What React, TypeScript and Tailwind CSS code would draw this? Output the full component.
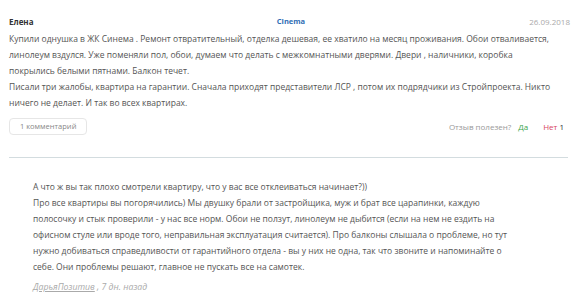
import React from 'react';

const reviewLines = [
  'Купили однушка в ЖК Синема . Ремонт отвратительный, отделка дешевая, ее хватило на месяц проживания. Обои отваливается,',
  'линолеум вздулся. Уже поменяли пол, обои, думаем что делать с межкомнатными дверями. Двери , наличники, коробка',
  'покрылись белыми пятнами. Балкон течет.',
  'Писали три жалобы, квартира на гарантии. Сначала приходят представители ЛСР , потом их подрядчики из Стройпроекта. Никто',
  'ничего не делает. И так во всех квартирах.',
];

const replyLines = [
  'А что ж вы так плохо смотрели квартиру, что у вас все отклеиваться начинает?))',
  'Про все квартиры вы погорячились) Мы двушку брали от застройщика, муж и брат все царапинки, каждую',
  'полосочку и стык проверили - у нас все норм. Обои не ползут, линолеум не дыбится (если на нем не ездить на',
  'офисном стуле или вроде того, неправильная эксплуатация считается). Про балконы слышала о проблеме, но тут',
  'нужно добиваться справедливости от гарантийного отдела - вы у них не одна, так что звоните и напоминайте о',
  'себе. Они проблемы решают, главное не пускать все на самотек.',
];

const App: React.FC = () => {
  return (
    <div className="w-[582px] h-[300px] bg-white overflow-hidden font-['Open_Sans',sans-serif]">
      {/* Review */}
      <div className="px-[9px] pt-[14px]">
        <div className="flex items-center justify-between h-4">
          <span className="w-24 text-[8px] font-bold text-[#333]">Елена</span>
          <span className="text-[7.5px] font-bold text-[#2f6db5]">Cinema</span>
          <span className="w-24 pr-[3px] text-right text-[8px] text-[#aaa]">26.09.2018</span>
        </div>
        <p className="mt-[1px] text-[8.5px] leading-4 text-[#555]">
          {reviewLines.map((line) => (
            <span key={line} className="block whitespace-nowrap">{line}</span>
          ))}
        </p>
        <div className="mt-[7px] flex items-center justify-between">
          <button className="h-[17px] px-[10px] border border-[#e6e6e6] rounded-sm text-[7.5px] text-[#888]">
            1 комментарий
          </button>
          <div className="flex items-center pr-[9px] text-[8px] text-[#999]">
            <span>Отзыв полезен?</span>
            <span className="ml-[7px] text-[#3aa54a]">Да</span>
            <span className="ml-[15px] text-[#d8455f]">
              Нет <span className="text-[#333]">1</span>
            </span>
          </div>
        </div>
        <div className="mt-[22px] mr-[5px] border-t border-[#d3dcdf]" />
      </div>

      {/* Reply */}
      <div className="pl-[33px] pr-[57px] pt-[21px]">
        <p className="text-[8.5px] leading-4 text-[#555]">
          {replyLines.map((line) => (
            <span key={line} className="block whitespace-nowrap">{line}</span>
          ))}
        </p>
        <div className="mt-[5px] text-[8.75px] italic leading-[14px] text-[#aaa]">
          <span className="underline">ДарьяПозитив</span> , 7 дн. назад
        </div>
      </div>
    </div>
  );
};

export default App;
